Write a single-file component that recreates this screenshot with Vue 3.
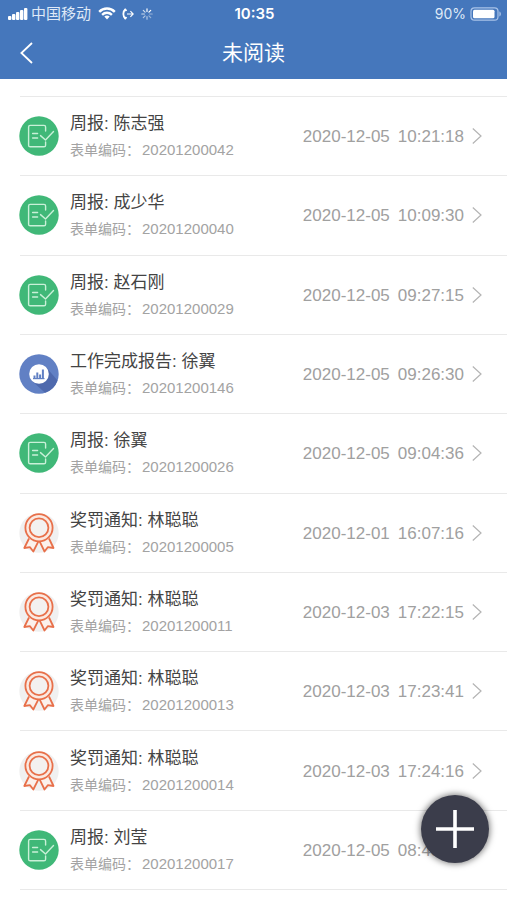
<script setup>
import { ref } from "vue";

// Unread items
const items = ref([
  { type: "week", title: "周报: 陈志强", code: "20201200042", date: "2020-12-05", time: "10:21:18" },
  { type: "week", title: "周报: 成少华", code: "20201200040", date: "2020-12-05", time: "10:09:30" },
  { type: "week", title: "周报: 赵石刚", code: "20201200029", date: "2020-12-05", time: "09:27:15" },
  { type: "work", title: "工作完成报告: 徐翼", code: "20201200146", date: "2020-12-05", time: "09:26:30" },
  { type: "week", title: "周报: 徐翼", code: "20201200026", date: "2020-12-05", time: "09:04:36" },
  { type: "award", title: "奖罚通知: 林聪聪", code: "20201200005", date: "2020-12-01", time: "16:07:16" },
  { type: "award", title: "奖罚通知: 林聪聪", code: "20201200011", date: "2020-12-03", time: "17:22:15" },
  { type: "award", title: "奖罚通知: 林聪聪", code: "20201200013", date: "2020-12-03", time: "17:23:41" },
  { type: "award", title: "奖罚通知: 林聪聪", code: "20201200014", date: "2020-12-03", time: "17:24:16" },
  { type: "week", title: "周报: 刘莹", code: "20201200017", date: "2020-12-05", time: "08:43:20" },
]);
</script>

<template>
  <div class="page">
    <header class="header">
      <!-- Status bar -->
      <div class="status-bar">
        <div class="status-left">
          <svg class="signal" width="20" height="12" viewBox="0 0 20 12" fill="#fff">
            <rect x="0" y="8" width="3.4" height="4" rx="1" />
            <rect x="4" y="6" width="3.4" height="6" rx="1" />
            <rect x="8" y="4" width="3.4" height="8" rx="1" />
            <rect x="12" y="2" width="3.4" height="10" rx="1" />
            <rect x="16" y="0" width="3.4" height="12" rx="1" />
          </svg>
          <span class="carrier">中国移动</span>
          <svg class="wifi" width="18" height="13" viewBox="0 0 18 13" fill="none" stroke="#fff" stroke-width="2.4">
            <path d="M1.2 4.8C5.5.4 12.5.4 16.8 4.8" />
            <path d="M4.1 7.8c2.8-2.7 7-2.7 9.8 0" />
            <path d="M6.3 9.4c1.6-1.3 3.8-1.3 5.4 0L9 12.4z" fill="#fff" stroke="none" />
          </svg>
          <svg class="call" width="12" height="12" viewBox="0 0 12 12" fill="none" stroke="#fff">
            <path d="M3.6 1C.6 3.5.6 8.5 3.6 11" stroke-width="1.8" />
            <path d="M3 1l1.4 2M3 11l1.4-2" stroke-width="1.8" />
            <path d="M5 6h6M8.4 3.2 11.2 6 8.4 8.8" stroke-width="1.1" />
          </svg>
          <svg class="spinner" width="12" height="12" viewBox="0 0 12 12" stroke="#fff" stroke-width="1.2" stroke-linecap="round">
            <path d="M6 .8v2.6M9.7 2.3 7.9 4.1" />
            <path d="M11.2 6H8.6M9.7 9.7 7.9 7.9" opacity=".45" />
            <path d="M6 11.2V8.6M2.3 9.7l1.8-1.8" opacity=".6" />
            <path d="M.8 6h2.6M2.3 2.3l1.8 1.8" opacity=".75" />
          </svg>
        </div>
        <span class="clock">10:35</span>
        <div class="status-right">
          <span>90%</span>
          <svg width="31" height="14" viewBox="0 0 31 14">
            <rect x="1" y=".8" width="27" height="12.4" rx="3.5" fill="none" stroke="#a9c3e8" stroke-width="1.2" />
            <rect x="3" y="2.8" width="21.5" height="8.4" rx="1.5" fill="#fff" />
            <path d="M29.4 4.6c2 .6 2 4.2 0 4.8z" fill="#a9c3e8" />
          </svg>
        </div>
      </div>
      <!-- Nav bar -->
      <div class="nav-bar">
        <button type="button" class="back-button" aria-label="返回">
          <svg width="14" height="22" viewBox="0 0 14 22" fill="none" stroke="#fff" stroke-width="1.8">
            <path d="M12 1 1.4 11 12 21" />
          </svg>
        </button>
        <h1 class="nav-title">未阅读</h1>
      </div>
    </header>

    <ul class="list">
      <li v-for="item in items" :key="item.code" class="row">
        <svg v-if="item.type === 'week'" class="avatar" viewBox="0 0 40 40" fill="none">
          <circle cx="20" cy="20" r="19.7" fill="#40b878" />
          <g stroke="#c9f0d8" stroke-width="1.4" stroke-linecap="round" stroke-linejoin="round">
            <path d="M26.6 15V11q0-1.6-1.6-1.6H11.200q-1.600 0-1.600 1.600v18.200q0 1.600 1.600 1.600H25q1.600 0 1.600-1.600V26" />
            <path d="M13.600 17.500h5M13.600 22h5" />
            <path d="M21.500 19.600l5 4.400 8-8.400" />
          </g>
        </svg>
        <svg v-else-if="item.type === 'work'" class="avatar" viewBox="0 0 40 40">
          <circle cx="20" cy="20" r="19.7" fill="#6180c4" />
          <path d="M27 13 38.5 26.5A19.7 19.7 0 0 1 26 38.8L13 27z" fill="#4e69ad" />
          <circle cx="20" cy="20" r="9.8" fill="#fff" />
          <g fill="#6180c4">
            <rect x="14.5" y="21.5" width="2" height="3.5" />
            <rect x="17.3" y="18.5" width="2" height="6.5" />
            <rect x="20.1" y="20.5" width="2" height="4.5" />
            <rect x="22.9" y="15.5" width="2" height="9.5" />
            <rect x="14" y="24" width="11.5" height="1.2" />
          </g>
        </svg>
        <svg v-else class="avatar" viewBox="0 0 40 40" fill="none">
          <circle cx="20" cy="20" r="19.7" fill="#f0f0f0" />
          <g stroke="#e8704a" stroke-width="1.8" stroke-linejoin="round">
            <path d="M10 25.5 5.3 35l5.7-.8 3.3 4.3 5.2-10.3" fill="#fbf1ec" />
            <path d="M30 25.5 34.5 35l-5.7-.8-3.3 4.3-5-10.3" fill="#fbf1ec" />
            <circle cx="20" cy="14.8" r="13.6" fill="#fbe9e1" />
            <circle cx="20" cy="14.8" r="9.4" fill="#f3f1f0" />
          </g>
        </svg>

        <div class="info">
          <p class="title">{{ item.title }}</p>
          <p class="sub">
            <span>表单编码：</span>
            <span class="code">{{ item.code }}</span>
          </p>
        </div>

        <div class="datetime">
          <span>{{ item.date }}</span>
          <span>{{ item.time }}</span>
        </div>
        <svg class="arrow" width="10" height="18" viewBox="0 0 10 18" fill="none" stroke="#b4b4b4" stroke-width="1.2">
          <path d="M.8 1.5 9 9 .8 16.5" />
        </svg>
      </li>
    </ul>

    <button type="button" class="add-button" aria-label="新增">
      <svg width="38" height="38" viewBox="0 0 38 38" stroke="#fff" stroke-width="3.6">
        <path d="M19 0v38M0 19h38" />
      </svg>
    </button>
  </div>
</template>

<style>
body {
  margin: 0;
  background: #fff;
}
</style>

<style scoped>
.page {
  display: flex;
  flex-direction: column;
  min-height: 100vh;
  font-family: "Liberation Sans", "Noto Sans CJK SC", sans-serif;
}

.header {
  color: #fff;
  background: #4577bc;
}

.status-bar {
  display: grid;
  grid-template-columns: 1fr auto 1fr;
  align-items: center;
  height: 27px;
  padding: 0 6px 0 8px;
  font-family: Inter, "Noto Sans CJK SC", sans-serif;
  font-size: 14px;
  line-height: 27px;
}

.status-left,
.status-right {
  display: flex;
  align-items: center;
}

.status-right {
  justify-content: flex-end;
  gap: 4px;
  color: #dfe9f7;
}

.carrier {
  margin: 0 7px 0 3px;
  font-size: 15px;
  color: #dfe9f7;
}

.call {
  margin: 0 7px 0 6px;
}

.clock {
  font-size: 15px;
  font-weight: 600;
}

.nav-bar {
  display: grid;
  grid-template-columns: 54px 1fr 54px;
  align-items: center;
  height: 52px;
}

.back-button {
  display: flex;
  padding: 8px 20px;
  background: none;
  border: none;
  cursor: pointer;
}

.nav-title {
  margin: 0;
  font-size: 21px;
  font-weight: 400;
  line-height: 50px;
  text-align: center;
}

.list {
  display: grid;
  flex: 1;
  grid-auto-rows: 1fr;
  margin: 17px 0 10px 20px;
  padding: 0;
  list-style: none;
  border-bottom: 1px solid #e9e9e9;
}

.row {
  display: flex;
  align-items: center;
  min-height: 72px;
  padding-right: 25px;
  border-top: 1px solid #e9e9e9;
}

.avatar {
  flex: none;
  width: 40px;
  height: 40px;
  margin-right: 11px;
  margin-left: -1px;
}

.info {
  flex: 1;
  min-width: 0;
  padding-top: 2px;
}

.title,
.sub {
  margin: 0;
  line-height: 26px;
  white-space: nowrap;
}

.title {
  font-size: 17px;
  color: #444;
}

.sub {
  display: flex;
  gap: 2px;
  font-size: 14px;
  color: #a3a3a3;
}

.code {
  font-size: 15px;
}

.datetime {
  display: flex;
  gap: 8px;
  margin-right: 8px;
  padding-top: 2px;
  font-size: 17px;
  color: #a0a0a0;
  white-space: nowrap;
}

.arrow {
  flex: none;
}

.add-button {
  position: fixed;
  right: 18px;
  bottom: 37px;
  display: flex;
  align-items: center;
  justify-content: center;
  width: 68px;
  height: 68px;
  padding: 0;
  background: #3b3d4b;
  border: none;
  border-radius: 50%;
  box-shadow: 0 0 6px 1px rgba(0, 0, 0, 0.5);
  cursor: pointer;
}
</style>
